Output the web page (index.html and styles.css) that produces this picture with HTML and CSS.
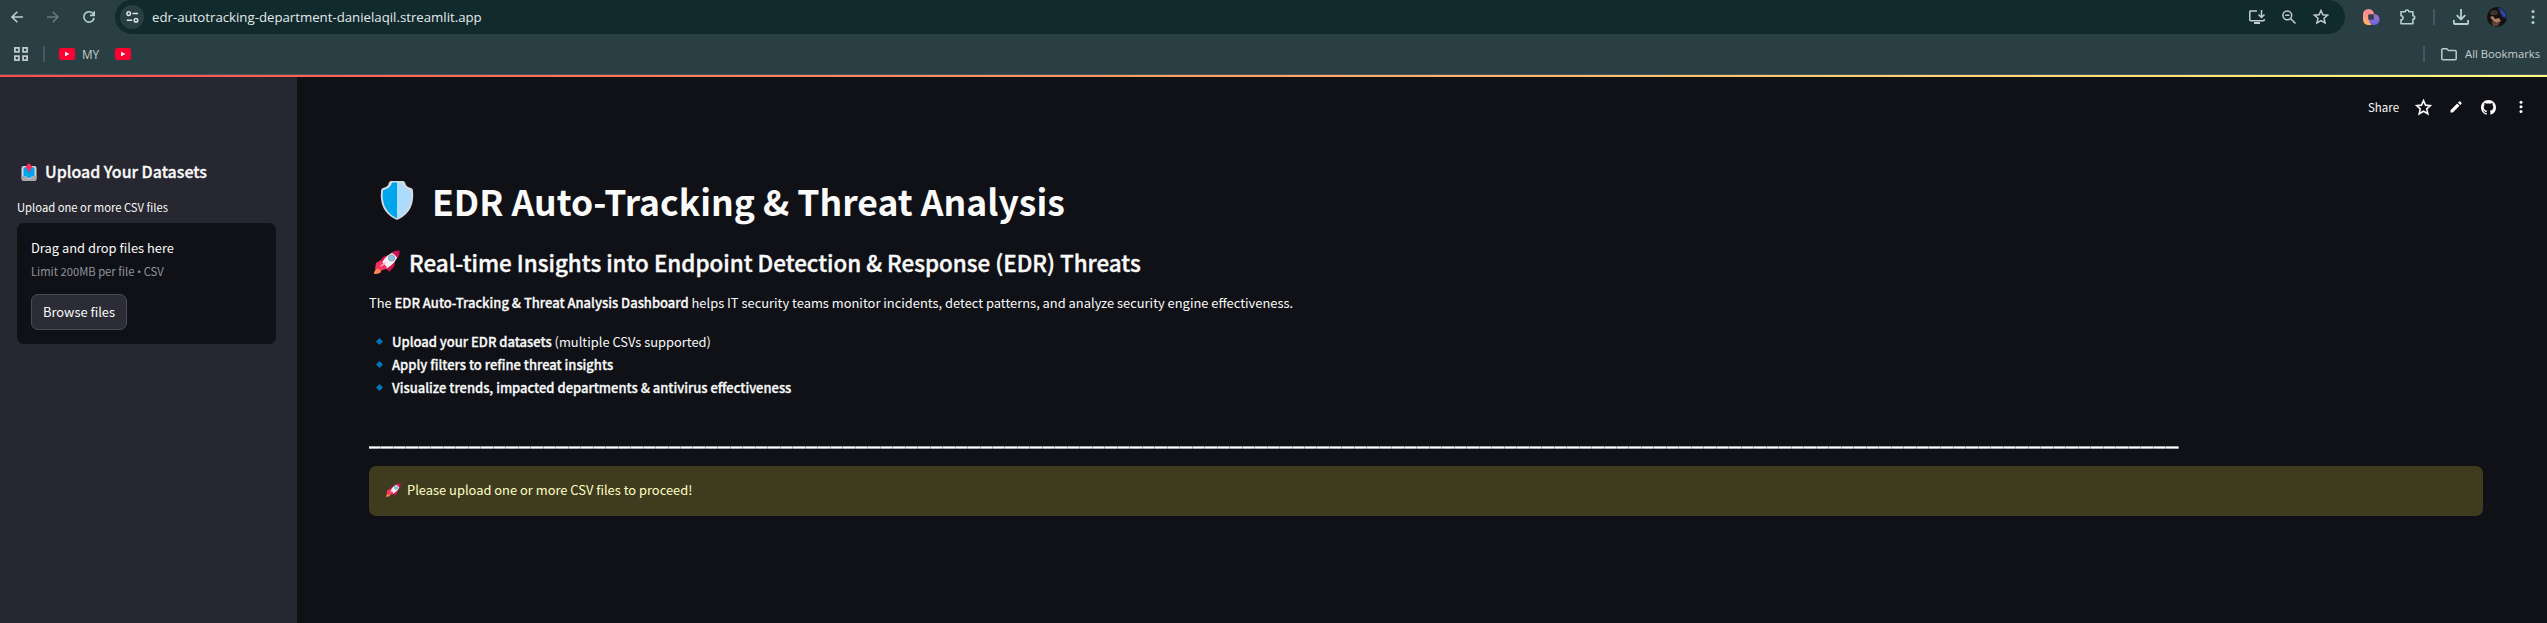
FILE: index.html
```html
<!DOCTYPE html>
<html lang="en">
<head>
<meta charset="utf-8">
<title>EDR Auto-Tracking &amp; Threat Analysis</title>
<link rel="stylesheet" href="styles.css">
</head>
<body>
<svg class="defs" width="0" height="0">
  <symbol id="rocket" viewBox="0 0 26 24">
    <path d="M6 11 9 7Q12 5 14 6L11 13ZM12 18l6-4 2-4q2 5-1 8l-4 4Z" fill="#c8114f"/>
    <path d="M7 15Q11 5 20 2l4 3Q22 13 12 19Z" fill="#f4f1f3"/>
    <path d="M17 2.500Q21 .2 25.500.5 26 5 23.500 8.500Q21 4 17 2.500Z" fill="#ca1552"/>
    <circle cx="17.500" cy="8" r="3" fill="#83c5f2" stroke="#92979f" stroke-width="1"/>
    <path d="M1 19l1-6 5-3 1 2 5 5-1 2-6 2Z" fill="#f8315f"/>
    <path d="m6.500 16.500 5-4" stroke="#f9b8c8" stroke-width="1.500"/>
    <path d="M0 24q0-4 3-5.500 4 0 4 3.500-2 2-7 2Z" fill="#ff8257"/>
  </symbol>
  <symbol id="star" viewBox="0 0 16 16">
    <path d="m8 1.500 1.900 4.300 4.700.4-3.600 3.100 1.100 4.600L8 11.500l-4.100 2.400L5 9.300 1.400 6.200l4.700-.4Z" fill="none" stroke="currentColor" stroke-width="1.500"/>
  </symbol>
  <symbol id="dots" viewBox="0 0 4 16">
    <circle cx="2" cy="2.600" r="1.500" fill="currentColor"/><circle cx="2" cy="8" r="1.500" fill="currentColor"/><circle cx="2" cy="13.400" r="1.500" fill="currentColor"/>
  </symbol>
  <symbol id="tube" viewBox="0 0 16 12">
    <rect width="16" height="12" rx="2.500" fill="#ff0033"/><path d="M6 3.700v4.600L10.500 6Z" fill="#fff"/>
  </symbol>
</svg>

<header class="browser">
  <div class="toolbar">
    <div class="nav">
      <svg width="12" height="12" viewBox="0 0 12 12"><path d="M12 6H1.200M6.300.7 1 6l5.300 5.300" fill="none" stroke="#b9d2d4" stroke-width="1.600"/></svg>
      <svg width="12" height="12" viewBox="0 0 12 12"><path d="M0 6h10.800M5.700.7 11 6l-5.300 5.300" fill="none" stroke="#647b7e" stroke-width="1.600"/></svg>
      <svg width="12" height="12" viewBox="0 0 12 12"><path d="M10.300 3A5.200 5.200 0 1 0 11.100 7M11.200.2v4.200H7" fill="none" stroke="#b9d2d4" stroke-width="1.600"/></svg>
    </div>
    <div class="omnibox">
      <span class="site">
        <svg width="13" height="12" viewBox="0 0 13 12" fill="none" stroke="#dbe4e5" stroke-width="1.500"><circle cx="2.700" cy="2.600" r="1.800"/><path d="M6.500 2.600H12M.8 9.200h5.400"/><circle cx="10" cy="9.200" r="1.800"/></svg>
      </span>
      <span class="url">edr-autotracking-department-danielaqil.streamlit.app</span>
      <div class="omni-icons">
        <svg width="16" height="14" viewBox="0 0 16 14" fill="none" stroke="currentColor" stroke-width="1.500"><path d="M8 .9H1.500q-.7 0-.7.700v8.500q0 .7.700.700h13q.7 0 .7-.7V9M12.500 0v7M9.500 4.500l3 3 3-3"/><path d="M5 13h6" stroke-width="2"/></svg>
        <svg width="14" height="14" viewBox="0 0 14 14" fill="none" stroke="currentColor" stroke-width="1.500"><circle cx="5.300" cy="5.300" r="4.400"/><path d="m8.500 8.500 5 5M3.200 5.300h4.200"/></svg>
        <svg width="16" height="16"><use href="#star"/></svg>
      </div>
    </div>
    <div class="extensions">
      <svg width="16" height="16" viewBox="0 0 16 16"><defs><linearGradient id="warm" x2="0" y2="1"><stop offset=".3" stop-color="#ff8f92"/><stop offset="1" stop-color="#ffb55f"/></linearGradient><linearGradient id="cool" x2="0" y2="1"><stop stop-color="#a077c8"/><stop offset="1" stop-color="#6b62dc"/></linearGradient></defs><path d="M0 5.500a5.500 5.500 0 0 1 11 0V11l-3 5H5.500A5.500 5.500 0 0 1 0 10.500Z" fill="url(#warm)"/><path d="M5.500 10.500A5.300 5.300 0 0 1 11 5a5.500 5.500 0 0 1 0 11q-4 0-5.500-5.500Z" fill="url(#cool)"/><rect x="5.200" y="5.200" width="5.600" height="5.600" rx="1" fill="#3c3b50"/></svg>
      <svg class="puzzle" width="16" height="16" viewBox="0 0 16 16"><path d="M1 2.800h4.300a1.800 1.800 0 0 1 3.600 0h4v4a1.800 1.800 0 0 1 0 3.600v4.300H1v-4a2 2 0 0 0 0-4Z" fill="none" stroke="#b3d0d3" stroke-width="1.600" stroke-linejoin="round"/></svg>
      <i class="sep"></i>
      <svg class="download" width="16" height="16" viewBox="0 0 16 16"><path d="M8 0v10M3.700 6.200 8 10.500l4.300-4.300M.9 11v3.200q0 .8.800.800h12.600q.8 0 .8-.8V11" fill="none" stroke="#b3d0d3" stroke-width="1.800"/></svg>
      <svg class="avatar" width="20" height="20" viewBox="0 0 20 20"><clipPath id="round"><circle cx="10" cy="10" r="10"/></clipPath><g clip-path="url(#round)"><rect width="20" height="20" fill="#15110f"/><path d="M11 1h9v11l-5-2Z" fill="#1f3272"/><path d="m14 4 4 5" stroke="#3a55b4" stroke-width="1.500"/><path d="M3 5q4-4 8 0l-1 3H4Z" fill="#3d332d"/><path d="m3 10 3-1 2 3 4-1 2 3-4 2-3-1Z" fill="#a97c60"/><path d="m4 14 4 2 5-1-2 4H6Z" fill="#5d4434"/></g></svg>
      <svg class="menu" width="4" height="16"><use href="#dots"/></svg>
    </div>
  </div>
  <div class="bookmarks">
    <svg width="14" height="14" viewBox="0 0 14 14" fill="none" stroke="#bfc9ca" stroke-width="1.800"><path d="M.9.9h4v4h-4ZM9.100.9h4v4h-4ZM.9 9.100h4v4h-4ZM9.100 9.100h4v4h-4Z"/></svg>
    <i class="sep first"></i>
    <svg width="16" height="12"><use href="#tube"/></svg>
    <span class="label my">MY</span>
    <svg width="16" height="12"><use href="#tube"/></svg>
    <div class="all">
      <i class="sep"></i>
      <svg width="16" height="13" viewBox="0 0 16 13"><path d="M.8 1.800q0-1 1-1h4l1.700 1.700h6.700q1 0 1 1v7.200q0 1-1 1H1.800q-1 0-1-1Z" fill="none" stroke="#bfc9ca" stroke-width="1.500"/></svg>
      <span class="label">All Bookmarks</span>
    </div>
  </div>
</header>
<div class="decoration"></div>

<div class="app">
  <aside class="sidebar">
    <h2 class="side-title">
      <svg width="16" height="18" viewBox="0 0 16 18"><path d="M2.500 3h11Q15.500 3 15.500 6v9q0 3-2.500 3H3Q.5 18 .5 15V6q0-3 2-3Z" fill="#d6d3da"/><path d="M.5 13h4q1 3 3.500 3t3.500-3h4v2q0 3-2.500 3H3Q.5 18 .5 15Z" fill="#aaa6ae"/><path d="M2.500 4.500h11V13H11q-.5 2-3 2t-3-2H2.500Z" fill="#00a6ed"/><path d="M8 0 11.500 4v1.500h-2V8.500h-3v-3h-2V4Z" fill="#f8315f"/></svg>
      <span>Upload Your Datasets</span>
    </h2>
    <label class="field-label">Upload one or more CSV files</label>
    <section class="dropzone">
      <div class="drop-title">Drag and drop files here</div>
      <div class="drop-limit">Limit 200MB per file <span class="bullet">•</span> CSV</div>
      <button class="browse">Browse files</button>
    </section>
  </aside>

  <main class="main">
    <div class="app-bar">
      <span class="share">Share</span>
      <svg class="fav" width="17" height="17" viewBox="0 0 16 16"><use href="#star" width="16" height="16"/></svg>
      <svg class="pencil" width="12" height="12" viewBox="0 0 12 12"><path d="M.5 11.500v-2.300l6.700-6.700 2.300 2.300-6.700 6.700ZM8 1.700 9.100.6q.6-.5 1.200 0l1.100 1.100q.5.600 0 1.200L10.300 4Z" fill="#fff"/></svg>
      <svg class="github" width="15" height="15" viewBox="0 0 16 16"><path fill="#fff" d="M8 0C3.580 0 0 3.580 0 8c0 3.540 2.290 6.530 5.470 7.590.4.070.55-.17.55-.38 0-.19-.01-.82-.01-1.490-2.010.37-2.530-.49-2.690-.94-.09-.23-.48-.94-.82-1.130-.28-.15-.68-.52-.01-.53.63-.01 1.080.58 1.230.82.72 1.210 1.870.87 2.330.66.070-.52.28-.87.51-1.070-1.780-.2-3.640-.89-3.640-3.950 0-.87.31-1.590.82-2.150-.08-.2-.36-1.020.08-2.120 0 0 .67-.21 2.200.82.64-.18 1.320-.27 2-.27s1.360.09 2 .27c1.530-1.040 2.200-.82 2.200-.82.44 1.100.16 1.920.08 2.120.51.56.82 1.270.82 2.150 0 3.070-1.870 3.750-3.650 3.950.29.25.54.73.54 1.480 0 1.070-.01 1.930-.01 2.200 0 .21.15.46.55.38A8.010 8.010 0 0 0 16 8c0-4.420-3.580-8-8-8Z"/></svg>
      <svg class="more" width="4" height="14" viewBox="0 0 4 14" fill="#fff"><circle cx="2" cy="2.200" r="1.500"/><circle cx="2" cy="6.800" r="1.500"/><circle cx="2" cy="11.400" r="1.500"/></svg>
    </div>

    <h1 class="title">
      <svg width="32" height="39" viewBox="0 0 32 39"><path d="M10 0h12q1.500 0 2 1.500Q25 6 30 7q2 .5 2 3 2 20-14 28-2 1.500-4 0Q-2 30 0 10q0-2.500 2-3 5-1 6-5.500Q8.500 0 10 0Z" fill="#d9dadf"/><path d="M16 1.500h-5Q10 7.500 2 9.200-.5 29 16 37.500Z" fill="#00a6ed"/><path d="M16 1.500h5q1 6 9 7.700Q32.500 29 16 37.500Z" fill="#aedcfd"/></svg>
      <span>EDR Auto-Tracking &amp; Threat Analysis</span>
    </h1>
    <h2 class="subtitle">
      <svg width="26" height="24"><use href="#rocket"/></svg>
      <span>Real-time Insights into Endpoint Detection &amp; Response (EDR) Threats</span>
    </h2>
    <p class="intro">The <strong>EDR Auto-Tracking &amp; Threat Analysis Dashboard</strong> helps IT security teams monitor incidents, detect patterns, and analyze security engine effectiveness.</p>
    <div class="points">
      <div class="point"><strong>Upload your EDR datasets</strong> (multiple CSVs supported)</div>
      <div class="point"><strong>Apply filters to refine threat insights</strong></div>
      <div class="point"><strong>Visualize trends, impacted departments &amp; antivirus effectiveness</strong></div>
    </div>
    <div class="rule"></div>
    <div class="alert">
      <svg width="15" height="14"><use href="#rocket"/></svg>
      <span>Please upload one or more CSV files to proceed!</span>
    </div>
  </main>
</div>
</body>
</html>
```
FILE: styles.css
```css
* { box-sizing: border-box; margin: 0; padding: 0; }

body {
  width: 2547px;
  height: 623px;
  overflow: hidden;
  display: flex;
  flex-direction: column;
  background: #0f1116;
  color: #fafafa;
  font-family: "Noto Sans CJK SC", "Open Sans", sans-serif;
  font-size: 12.9px;
}

svg { display: block; flex: none; overflow: visible; }
.defs { position: absolute; }
i.sep { display: block; width: 2px; height: 16px; background: #435a60; }

/* Browser window frame */
.browser {
  height: 75px;
  flex: none;
  background: #293f43;
  border-bottom: 1px solid #44555a;
  font-family: "Open Sans", sans-serif;
}
.toolbar { display: flex; height: 34px; }
.nav { width: 115px; padding-left: 11px; display: flex; align-items: center; gap: 24px; }
.omnibox {
  width: 2230px;
  padding: 0 16px 0 5px;
  display: flex;
  align-items: center;
  border-radius: 17px;
  background: #112a2e;
}
.site {
  width: 24px;
  height: 24px;
  display: grid;
  place-items: center;
  border-radius: 50%;
  background: #293f43;
}
.url { margin-left: 8px; font-size: 13.23px; line-height: 20px; color: #e3eaea; white-space: nowrap; }
.omni-icons { margin-left: auto; display: flex; align-items: center; gap: 17px; color: #c3cccd; }
.extensions { display: flex; align-items: center; padding-left: 18px; }
.puzzle { margin: 0 17px 0 21px; }
.download { margin: 0 18px; }
.menu { margin-left: 24px; color: #b3d0d3; }

.bookmarks { height: 40px; padding: 0 7px 0 14px; display: flex; align-items: center; }
.first { margin: 0 14px 0 15px; }
.label { font-size: 11.26px; line-height: 16px; color: #c6cfd0; white-space: nowrap; }
.my { width: 33px; margin-left: 7px; font-size: 11.8px; }
.all { margin-left: auto; display: flex; align-items: center; }
.all svg { margin: 0 8px 0 16px; }

.decoration { height: 2px; flex: none; background: linear-gradient(90deg, #ff4b4b, #fffd80); }

/* Application */
.app { flex: 1; display: flex; }
.sidebar { width: 297px; flex: none; padding: 83px 21px 0 17px; background: #262730; }
.side-title {
  height: 24px;
  padding-left: 4px;
  display: flex;
  align-items: center;
  gap: 8px;
  font-size: 15.94px;
  line-height: 24px;
  font-weight: 500;
  -webkit-text-stroke: .3px #fafafa;
  white-space: nowrap;
}
.field-label { display: block; margin-top: 14px; font-size: 11.24px; line-height: 18px; }
.dropzone {
  width: 259px;
  height: 121px;
  margin-top: 7px;
  padding: 14px;
  border-radius: 7px;
  background: #0f1116;
}
.drop-title { height: 22px; line-height: 22px; }
.drop-limit { margin-top: 3px; height: 18px; font-size: 11.24px; line-height: 18px; color: #92939a; }
.bullet { font-family: "Open Sans", sans-serif; }
.browse {
  display: block;
  width: 96px;
  height: 36px;
  margin-top: 14px;
  padding-bottom: 2px;
  border: 1px solid #4b4c55;
  border-radius: 7px;
  background: #2b2c36;
  color: #fafafa;
  font: inherit;
}

.main { flex: 1; padding: 0 64px 0 72px; }
.app-bar { height: 60px; display: flex; align-items: center; justify-content: flex-end; margin-right: -40px; }
.share { font-size: 11.49px; line-height: 18px; }
.fav { margin: 0 18px 0 16px; }
.github { margin: 0 23px 0 19px; }

.title {
  height: 41px;
  margin-top: 43px;
  padding-left: 12px;
  display: flex;
  align-items: center;
  gap: 19px;
  font-size: 35.5px;
  line-height: 41px;
  font-weight: 700;
}
.subtitle {
  height: 32px;
  margin-top: 25px;
  padding-left: 5px;
  display: flex;
  align-items: center;
  gap: 9px;
  font-size: 22.4px;
  line-height: 32px;
  font-weight: 500;
  -webkit-text-stroke: .4px #fafafa;
}
.intro { margin-top: 13px; line-height: 24px; }
strong { font-size: 12.97px; font-weight: 500; -webkit-text-stroke: .3px #fafafa; }
.points { margin-top: 15px; padding-left: 7px; }
.point { height: 23px; line-height: 23px; display: flex; align-items: center; white-space: pre; }
.point::before {
  content: "";
  width: 5px;
  height: 5px;
  margin: 0 10px 0 1px;
  transform: rotate(45deg);
  background: #0074ba;
}
.rule {
  width: 1810px;
  height: 3px;
  margin-top: 47px;
  background:
    repeating-linear-gradient(90deg, transparent 0 11.480px, rgba(14, 17, 23, .3) 11.480px 12.480px),
    linear-gradient(#a9aaac 0 1px, #fff 1px 2px, #a9aaac 2px 3px);
}
.alert {
  height: 50px;
  margin-top: 17px;
  padding: 0 17px 3px;
  display: flex;
  align-items: center;
  gap: 6px;
  border-radius: 7px;
  background: #3e3b1f;
  color: #ffffc2;
}
```
